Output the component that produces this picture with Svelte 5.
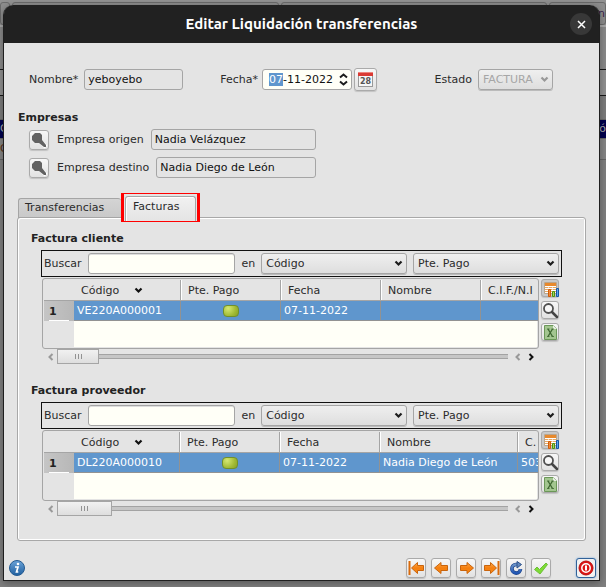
<script>
  import { onMount } from 'svelte';

  let dateInput;
  let name = $state('yeboyebo');
  let date = $state('07-11-2022');

  const sections = [
    {
      id: 'cliente',
      title: 'Factura cliente',
      columns: [
        { label: 'Código', width: 107 },
        { label: 'Pte. Pago', width: 100 },
        { label: 'Fecha', width: 100 },
        { label: 'Nombre', width: 100 },
        { label: 'C.I.F./N.I', width: 100 }
      ],
      row: ['VE220A000001', true, '07-11-2022', '', ''],
      thumb: 42
    },
    {
      id: 'proveedor',
      title: 'Factura proveedor',
      columns: [
        { label: 'Código', width: 106 },
        { label: 'Pte. Pago', width: 100 },
        { label: 'Fecha', width: 100 },
        { label: 'Nombre', width: 138 },
        { label: 'C.', width: 100 }
      ],
      row: ['DL220A000010', true, '07-11-2022', 'Nadia Diego de León', '503'],
      thumb: 55
    }
  ];

  const companies = [
    { id: 'origen', label: 'Empresa origen', value: 'Nadia Velázquez' },
    { id: 'destino', label: 'Empresa destino', value: 'Nadia Diego de León' }
  ];

  onMount(() => {
    dateInput.focus();
    dateInput.setSelectionRange(0, 2);
  });
</script>

{#snippet chevron()}
  <svg class="chevron" width="9" height="7" viewBox="0 0 9 7" aria-hidden="true">
    <path d="M1.5 1.5 4.5 4.5 7.5 1.5" fill="none" stroke="currentColor" stroke-width="2.2" />
  </svg>
{/snippet}

{#snippet arrow(flip)}
  <svg width="6" height="8" viewBox="0 0 6 8" aria-hidden="true">
    <path d={flip ? 'M1.5 1 4.5 4 1.5 7' : 'M4.5 1 1.5 4 4.5 7'} fill="none" stroke="currentColor" stroke-width="2" />
  </svg>
{/snippet}

{#snippet orangeArrow(right, bar)}
  <svg width="17" height="16" viewBox="0 0 17 16" aria-hidden="true">
    <g transform={right ? 'translate(17 0) scale(-1 1)' : undefined}>
      {#if bar}<path d="M1.5 1v14" stroke="#d96a0c" stroke-width="2" />{/if}
      <path
        d={bar ? 'M3.5 8 9.5 2.500v3h6v5h-6v3z' : 'M1.500 8 8 2.500v3h6.500v5H8v3z'}
        fill="url(#orange)" stroke="#c9640d" stroke-linejoin="round" />
    </g>
  </svg>
{/snippet}

<svg class="defs" width="0" height="0" aria-hidden="true">
  <defs>
    <linearGradient id="orange" x2="0" y2="1">
      <stop offset="0" stop-color="#ffab4a" /><stop offset=".5" stop-color="#f57f10" /><stop offset="1" stop-color="#f98a13" />
    </linearGradient>
    <linearGradient id="info" x2="0" y2="1">
      <stop offset="0" stop-color="#6ba3d8" /><stop offset="1" stop-color="#1f5f9f" />
    </linearGradient>
    <linearGradient id="blue" x2="0" y2="1">
      <stop offset="0" stop-color="#6c93c8" /><stop offset="1" stop-color="#1f55b4" />
    </linearGradient>
  </defs>
</svg>

<div class="screen">
  <div class="behind" aria-hidden="true">
    <div class="bar tabs-behind"><i></i><i></i><i></i><i>n</i></div>
    <div class="bar tool"></div>
    <div class="bar head"></div>
    <div class="bar empty"></div>
    <div class="bar picked"><span>C</span><span>ó</span></div>
    <div class="bar next"><span>C</span></div>
  </div>

  <div class="dialog" role="dialog" aria-labelledby="dialog-title">
    <header>
      <h1 id="dialog-title">Editar Liquidación transferencias</h1>
      <button class="close" aria-label="Cerrar">
        <svg width="9" height="9" viewBox="0 0 9 9"><path d="M1 1l7 7M8 1 1 8" stroke="#fff" stroke-width="1.500" /></svg>
      </button>
    </header>

    <main>
      <div class="fields">
        <div class="field nombre">
          <label for="nombre">Nombre*</label>
          <input id="nombre" class="box name" bind:value={name} />
        </div>
        <div class="field">
          <label for="fecha">Fecha*</label>
          <span class="spin">
            <input id="fecha" bind:this={dateInput} bind:value={date} />
            <svg width="9" height="13" viewBox="0 0 9 13" aria-hidden="true">
              <path d="M1 4.500 4.500 1.500 8 4.500M1 8.500 4.500 11.500 8 8.500" fill="none" stroke="#1c1c1c" stroke-width="2" />
            </svg>
          </span>
          <button class="btn calendar" aria-label="Elegir fecha">
            <svg width="17" height="17" viewBox="0 0 17 17">
              <rect x="1.500" y="1.500" width="14" height="14" fill="#f6f6f6" stroke="#999" />
              <path d="M1 1h15v4H1z" fill="#d93a34" /><path d="M1 1h15v1H1z" fill="#ee837c" />
              <text x="8.500" y="13" text-anchor="middle" font-size="8" font-weight="bold" fill="#555">28</text>
            </svg>
          </button>
        </div>
        <div class="field estado">
          <label for="estado">Estado</label>
          <span class="drop off"><select id="estado" disabled><option>FACTURA</option></select>{@render chevron()}</span>
        </div>
      </div>

      <h2>Empresas</h2>
      <div class="companies">
        {#each companies as c (c.id)}
          <div class="company">
            <button class="btn find" aria-label={`Buscar ${c.label}`}>
              <svg width="18" height="18" viewBox="0 0 18 18">
                <path d="M10 10l6 6" stroke="#fff" stroke-width="4" />
                <path d="M5 2h5l2 2v5l4 5v2h-2l-5-4H5L2 9V5z" fill="#626262" />
              </svg>
            </button>
            <label for={c.id}>{c.label}</label>
            <input id={c.id} class="box" value={c.value} readonly />
          </div>
        {/each}
      </div>

      <div class="tabs" role="tablist">
        <button class="tab" role="tab" aria-selected="false">Transferencias</button>
        <div class="marked"><button class="tab current" role="tab" aria-selected="true">Facturas</button></div>
      </div>

      <div class="panel" role="tabpanel">
        {#each sections as s (s.id)}
          <section>
            <h2>{s.title}</h2>
            <div class="search">
              <label for={`buscar-${s.id}`}>Buscar</label>
              <input id={`buscar-${s.id}`} class="box query" />
              <label for={`campo-${s.id}`}>en</label>
              <span class="drop wide"><select id={`campo-${s.id}`}><option>Código</option></select>{@render chevron()}</span>
              <span class="drop wide"><select aria-label="Segundo campo"><option>Pte. Pago</option></select>{@render chevron()}</span>
            </div>
            <div class="grid">
              <div class="listing">
                <div class="frame">
                  <table>
                    <colgroup>
                      <col style:width="30px" />
                      {#each s.columns as c}<col style:width={`${c.width}px`} />{/each}
                    </colgroup>
                    <thead>
                      <tr>
                        <td></td>
                        {#each s.columns as c, i}
                          <th scope="col"><span>{c.label}{#if i === 0}{@render chevron()}{/if}</span></th>
                        {/each}
                      </tr>
                    </thead>
                    <tbody>
                      <tr>
                        <th scope="row"><span>1</span></th>
                        {#each s.row as cell}
                          <td>{#if cell === true}<i class="led"></i>{:else}{cell}{/if}</td>
                        {/each}
                      </tr>
                    </tbody>
                  </table>
                  <div class="blank"></div>
                </div>
                <div class="scroll">
                  <button class="dim" aria-label="Izquierda">{@render arrow(false)}</button>
                  <div class="track"><div class="thumb" style:width={`${s.thumb}px`}><i></i><i></i><i></i></div></div>
                  <button class="dim" aria-label="Izquierda">{@render arrow(false)}</button>
                  <button aria-label="Derecha">{@render arrow(true)}</button>
                </div>
              </div>
              <div class="tools">
                <button class="btn small on" aria-label="Columnas">
                  <svg width="17" height="17" viewBox="0 0 17 17">
                    <path d="M2.500 2.500h12v11h-12z" fill="#fff" stroke="#b9a58d" />
                    <path d="M3 3h11v3H3z" fill="#e8892c" />
                    <path d="M3 7.500h11M3 9.500h11M3 11.500h11" stroke="#e6a765" />
                    <path d="M6.500 6v7M10.500 6v7" stroke="#fff" stroke-opacity=".6" />
                    <path d="M6.500 9.500h2v7h-2z" fill="#f28a36" stroke="#cf5d0b" />
                    <path d="M10.500 11.500h2v5h-2z" fill="#a4d65a" stroke="#4c9010" />
                    <path d="M14.500 8.500h2v8h-2z" fill="#5aa4ed" stroke="#1657a5" />
                  </svg>
                </button>
                <button class="btn small" aria-label="Buscar registro">
                  <svg width="17" height="17" viewBox="0 0 17 17">
                    <circle cx="6.500" cy="6.500" r="4.500" fill="#f7f7f7" stroke="#505050" stroke-width="1.800" />
                    <path d="M10 10l5 5" stroke="#454545" stroke-width="2.500" stroke-linecap="round" />
                  </svg>
                </button>
                <button class="btn small" aria-label="Exportar a hoja de cálculo">
                  <svg width="17" height="17" viewBox="0 0 17 17">
                    <path d="M2.500 1.500h9l3 3v11h-12z" fill="#a3c690" stroke="#6b9758" />
                    <path d="M11 1v4h4z" fill="#e6efe1" />
                    <path d="M6 5 10.500 12.500M10.500 5 6 12.500" stroke="#3d6630" stroke-width="1.300" />
                    <path d="M5 5h2.500M9.500 5H12M5 12.500h2.500M9.500 12.500H12" stroke="#3d6630" stroke-width=".8" />
                  </svg>
                </button>
              </div>
            </div>
          </section>
        {/each}
      </div>

      <footer>
        <button class="info" aria-label="Información">
          <svg width="16" height="16" viewBox="0 0 16 16">
            <circle cx="8" cy="8" r="7.500" fill="url(#info)" stroke="#245b92" />
            <circle cx="9" cy="4" r="1.300" fill="#fff" />
            <path d="M6 7h3L7.500 12h1.800" fill="none" stroke="#fff" stroke-width="1.700" />
          </svg>
        </button>
        <div class="actions">
          <button class="btn" aria-label="Primero">{@render orangeArrow(false, true)}</button>
          <button class="btn" aria-label="Anterior">{@render orangeArrow(false, false)}</button>
          <button class="btn" aria-label="Siguiente">{@render orangeArrow(true, false)}</button>
          <button class="btn" aria-label="Último">{@render orangeArrow(true, true)}</button>
          <button class="btn" aria-label="Actualizar">
            <svg width="16" height="16" viewBox="0 0 16 16">
              <path d="M10 4.500H8A4.300 4.300 0 1 0 12.500 9" fill="none" stroke="#1d4389" stroke-width="3.600" />
              <path d="M10 4.500H8A4.300 4.300 0 1 0 12.500 9" fill="none" stroke="url(#blue)" stroke-width="2.400" />
              <path d="M9 1.500 13.500 4.500 9 8z" fill="#6489bd" stroke="#2c5089" stroke-linejoin="round" />
            </svg>
          </button>
          <button class="btn" aria-label="Aceptar">
            <svg width="16" height="16" viewBox="0 0 16 16">
              <path d="M1.500 9.500 4 7l2.500 2.500L13 3l1.500 1.500L7 14z" fill="#7edb35" stroke="#6cbf38" stroke-linejoin="round" />
            </svg>
          </button>
        </div>
        <button class="btn quit" aria-label="Cancelar">
          <svg width="16" height="16" viewBox="0 0 16 16">
            <circle cx="8" cy="8" r="7" fill="#dd1414" stroke="#b90d0d" />
            <circle cx="8" cy="8" r="4.200" fill="none" stroke="#fff" stroke-width="1.500" />
            <path d="M8 5.500v5" stroke="#fff" stroke-width="2" />
          </svg>
        </button>
      </footer>
    </main>
  </div>
</div>

<style>
  :global(body) { background: #828282; }
  .screen, .screen * { box-sizing: border-box; }
  .defs { position: absolute; }
  .screen {
    position: relative;
    min-height: 100vh;
    padding: 5px 6px 5px 3px;
    font: 11px/14px "DejaVu Sans", Verdana, sans-serif;
    color: #2b2b2b;
    background: #808080;
  }
  button, input, select { font: inherit; color: inherit; margin: 0; padding: 0; outline: none; }
  button { border: 0; background: none; }
  svg { display: block; flex: none; }
  h1, h2 { margin: 0; }

  .behind { position: absolute; inset: 0; overflow: hidden; }
  .bar { display: flex; justify-content: space-between; align-items: center; }
  .tabs-behind { height: 25px; padding-top: 2px; gap: 2px; background: #929292; align-items: stretch; }
  .tabs-behind i { flex: 3; border: 1px solid #6c6c6c; border-radius: 3px; background: #8e8e8e; }
  .tabs-behind i:first-child { flex: 0 0 10px; }
  .tabs-behind i:last-child { flex: 0 0 57px; font-style: normal; color: #3a1d4a; text-align: right; line-height: 22px; }
  .tool { height: 44px; border-top: 2px solid #aaa; background: #8b8b8b; }
  .head { height: 27px; border: solid #171717; border-width: 1px 0; background: #929292; }
  .empty { height: 23px; background: #7d7d7d; }
  .picked { height: 20px; background: #00004e; color: #a9a9a9; border: solid #686868; border-width: 1px 0; }
  .next { height: 21px; color: #5a3119; border-bottom: 1px solid #666; background: #868686; }

  .dialog {
    position: relative;
    border: 1px solid #1f1f1f;
    border-top: 0;
    border-radius: 10px 10px 0 0;
    background: #e4e4e4;
    box-shadow: 0 2px 8px rgb(0 0 0 / 35%);
  }
  header {
    display: grid;
    grid-template-columns: 1fr auto 1fr;
    align-items: center;
    height: 38px;
    padding: 0 7px;
    border-radius: 9px 9px 0 0;
    background: #212121;
    color: #fff;
  }
  h1 { grid-column: 2; font: bold 15px/20px Ubuntu, "Noto Sans", sans-serif; }
  .close { display: grid; place-items: center; justify-self: end; width: 22px; height: 22px; border-radius: 50%; background: #383838; }

  main { padding: 25px 3px 2px; }
  .fields { display: flex; gap: 37px; padding: 0 43px 0 22px; }
  .field { display: flex; align-items: center; gap: 4px; }
  .nombre { gap: 6px; }
  .estado { gap: 6px; margin-left: auto; }
  .box {
    height: 21px;
    min-width: 0;
    padding: 0 3px;
    border: 1px solid #a5a5a5;
    border-radius: 3px;
    background: #e4e4e4;
    color: #111;
  }
  .name { width: 99px; }
  .spin {
    display: flex;
    align-items: center;
    width: 90px;
    height: 21px;
    padding: 0 4px 0 6px;
    border: 1px solid #a5a5a5;
    border-radius: 3px;
    background: #fffff7;
  }
  .spin input { width: 70px; height: 15px; border: 0; background: none; color: #111; }
  .spin input::selection { background: #5f96cd; color: #fff; }
  .btn {
    display: grid;
    place-items: center;
    width: 20px;
    height: 20px;
    border: 1px solid #aaa;
    border-radius: 3px;
    background: linear-gradient(#f7f7f7, #e2e2e2);
    box-shadow: 0 1px 1px rgb(0 0 0 / 15%);
  }
  .calendar { width: 23px; height: 23px; margin-left: -2px; }

  .drop { display: grid; align-items: center; }
  .drop select, .drop .chevron { grid-area: 1 / 1; }
  .drop .chevron { justify-self: end; margin-right: 4px; pointer-events: none; color: #1c1c1c; }
  .drop select {
    appearance: none;
    width: 100%;
    height: 21px;
    padding: 0 4px;
    border: 1px solid #a5a5a5;
    border-radius: 3px;
    background: linear-gradient(#efefef, #dedede);
    box-shadow: 0 1px 0 #bbb;
  }
  .off { width: 75px; }
  .off select { color: #a6a6a6; opacity: 1; }
  .off .chevron { color: #989898; }

  h2 { font: bold 11px/14px "DejaVu Sans", Verdana, sans-serif; color: #222; }
  main > h2 { margin: 20px 11px 4px; }
  .companies { display: flex; flex-direction: column; gap: 7px; width: 309px; padding-left: 22px; }
  .company { display: flex; align-items: center; }
  .company label { margin: 0 7px 0 8px; white-space: nowrap; }
  .company .box { flex: 1; }

  .tabs { display: flex; align-items: flex-end; margin: 15px 11px 0; }
  .tab { height: 20px; border: 1px solid #a5a5a5; border-radius: 3px 3px 0 0; }
  .tabs > .tab { width: 103px; margin-bottom: 4px; background: linear-gradient(#d4d4d4, #c9c9c9); border-right: 0; padding: 0 6px; text-align: left; }
  .marked { position: relative; z-index: 1; width: 79px; height: 29px; padding: 2px 1px; border: solid #f00; border-width: 1px 3px; background: #e4e4e4; }
  .current { width: 100%; height: 25px; padding: 0 7px 5px; border-bottom: 0; text-align: left; background: linear-gradient(#f1f1f1, #e4e4e4); box-shadow: inset 1px 1px #fff; }

  .panel {
    display: flex;
    flex-direction: column;
    gap: 20px;
    margin: -5px 10px 0;
    padding: 14px 23px 24px 13px;
    border: 1px solid #a8a8a8;
    border-radius: 3px;
    box-shadow: inset 1px 1px #fff, inset -1px -1px #fff;
  }
  .search {
    display: flex;
    align-items: center;
    gap: 6px;
    height: 27px;
    margin: 4px 0 1px 10px;
    padding: 0 2px;
    border: 1px solid #111;
  }
  .query { flex: 1 1 147px; background: #fffff7; box-shadow: inset 0 1px #ddd; }
  .wide { flex: 1 1 145px; }
  .grid { display: flex; gap: 2px; margin: 0 3px 0 11px; }
  .listing { flex: 1; min-width: 0; }
  .frame { display: flex; flex-direction: column; height: 71px; padding: 1px; border: 1px solid #a5a5a5; border-radius: 3px; overflow: hidden; }
  table { width: 0; min-width: 100%; table-layout: fixed; border-collapse: separate; border-spacing: 0; }
  td, th { padding: 0; overflow: hidden; white-space: nowrap; text-align: left; font-weight: normal; }
  thead tr { height: 21px; }
  thead td, thead th { border-bottom: 1px solid #a5a5a5; }
  thead th span { display: flex; align-items: center; gap: 15px; height: 20px; padding: 1px 0 0 7px; border-right: 1px solid #a5a5a5; box-shadow: inset 1px 0 #fff; }
  thead th:nth-child(2) span { box-shadow: none; }
  thead th .chevron { color: #111; }
  tbody tr { height: 20px; }
  tbody td { padding: 1px 3px 0; border-right: 1px solid #929292; border-bottom: 1px solid #929292; background: #5f96cd; color: #fff; }
  tbody th { padding: 0 5px; background: linear-gradient(90deg, #c5c5c5, #b7b7b7); font-weight: bold; color: #222; }
  tbody th span { display: block; height: 19px; line-height: 19px; border-bottom: 1px solid #fff; }
  .led { display: block; width: 16px; height: 12px; margin: 0 auto; border: 1px solid #71902b; border-radius: 4px; background: radial-gradient(circle at 30% 25%, #d5e873, #a2bb35 60%, #86a028); }
  .blank { flex: 1; margin-left: 30px; background: #fffff7; }
  .scroll { display: flex; align-items: center; height: 15px; padding: 0 2px; }
  .scroll button { display: grid; place-items: center; width: 13px; height: 15px; color: #111; }
  .scroll .dim { color: #999; }
  .track { flex: 1; display: flex; align-items: center; height: 15px; margin-right: 3px; background: linear-gradient(transparent 5px, #a3a3a3 5px, #a3a3a3 6px, #c6c6c6 6px, #c6c6c6 9px, #a3a3a3 9px, #a3a3a3 10px, transparent 10px); }
  .thumb { display: flex; align-items: center; justify-content: center; gap: 2px; height: 15px; border: 1px solid #a5a5a5; background: linear-gradient(#f1f1f1, #dedede); }
  .thumb i { width: 1px; height: 5px; background: #929292; }
  .tools { display: flex; flex-direction: column; gap: 4px; padding-top: 1px; }
  .small { width: 18px; height: 18px; }
  .on { background: #c9c9c9; }

  footer { display: flex; align-items: center; margin-top: 17px; padding-left: 2px; }
  .actions { display: flex; gap: 5px; margin: 0 25px 0 auto; }
  .quit { border-color: #316298; box-shadow: 0 0 2px #6aa0d8; background: #f2f2f2; }
</style>
